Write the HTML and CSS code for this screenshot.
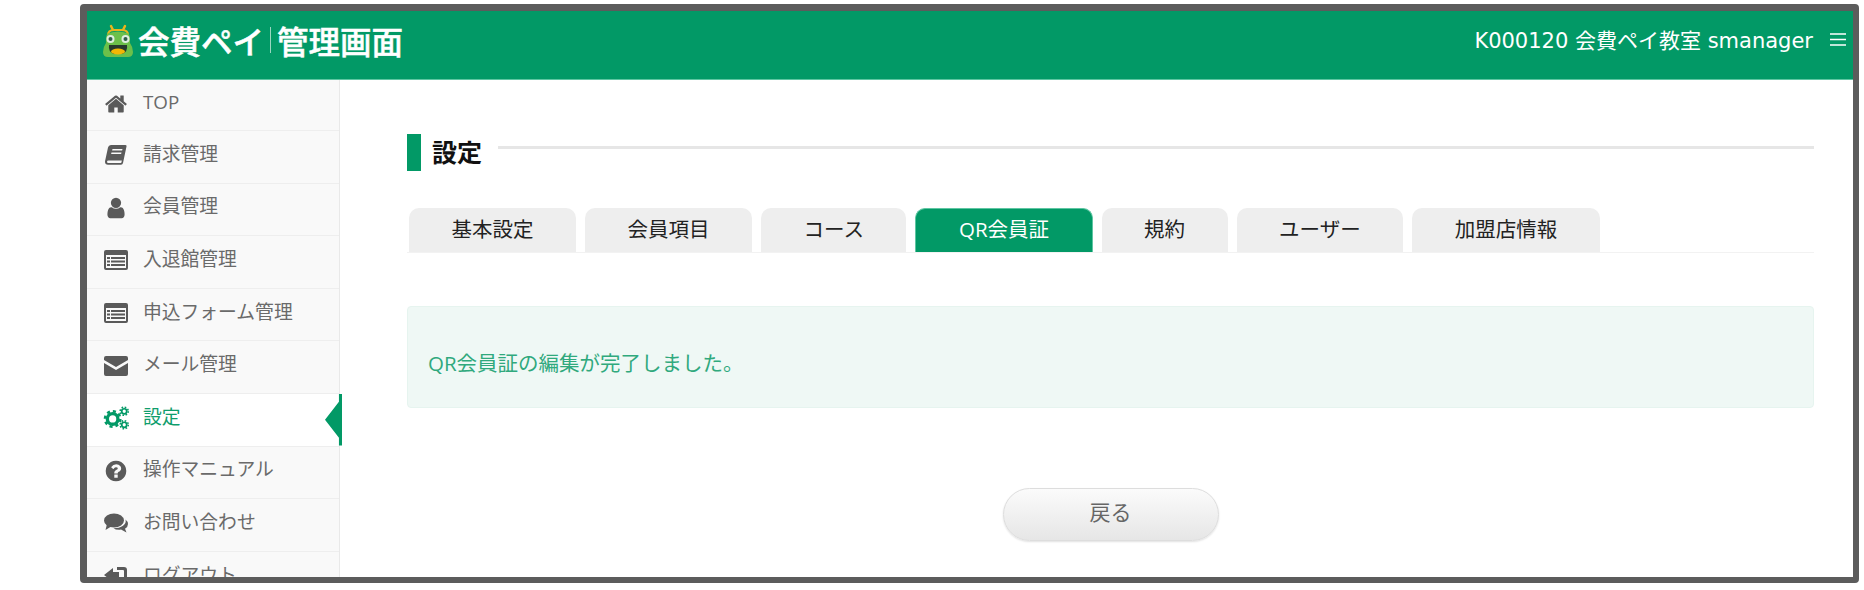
FILE: index.html
```html
<!DOCTYPE html>
<html lang="ja">
<head>
<meta charset="utf-8">
<title>設定</title>
<link rel="stylesheet" href="styles.css">
</head>
<body>
<div class="frame">
  <header class="topbar">
    <div class="brand">
      <svg class="frog" viewBox="0 0 30 33" aria-hidden="true">
        <path d="M5 11 Q5 6 11 6 L19 6 Q25 6 25 11" fill="none" stroke="#e9b51c" stroke-width="2"/>
        <path d="M10 6 L8 2 M20 6 L22 2" stroke="#e9b51c" stroke-width="2.5" stroke-linecap="round"/>
        <path d="M6 9 Q15 6 24 9 Q27 10 27 15 L27 19 Q30 23 30 28 Q30 33 25 33 L5 33 Q0 33 0 28 Q0 23 3 19 L3 15 Q3 10 6 9Z" fill="#6cc04a"/>
        <circle cx="7.500" cy="15" r="4" fill="#dfeee0"/>
        <circle cx="22.500" cy="15" r="4" fill="#dfeee0"/>
        <circle cx="7.500" cy="15" r="2" fill="#2f5f4a"/>
        <circle cx="22.500" cy="15" r="2" fill="#2f5f4a"/>
        <path d="M6 21 L24 21 Q25 28 19 30 L11 30 Q5 28 6 21Z" fill="#263a2c"/>
        <ellipse cx="15" cy="27.500" rx="7" ry="3" fill="#f2b705"/>
      </svg>
      <span class="brand-name">会費ペイ</span>
      <span class="brand-sep"></span>
      <span class="brand-name">管理画面</span>
    </div>
    <div class="account">
      <span>K000120 会費ペイ教室 smanager</span>
      <svg class="burger" viewBox="0 0 16 13" aria-hidden="true"><path d="M0 1H16M0 6.500H16M0 12H16" stroke="#fff" stroke-width="1.600"/></svg>
    </div>
  </header>
  <div class="body">
    <nav class="sidebar">
      <a class="item"><svg class="icon" viewBox="0 0 1792 1792"><path d="M1472 992v480q0 26-19 45t-45 19h-384v-384h-256v384h-384q-26 0-45-19t-19-45v-480q0-1 .5-3t.5-3l575-474 575 474q1 2 1 6zm223-69l-62 74q-8 9-21 11h-3q-13 0-21-7l-692-577-692 577q-12 8-24 7-13-2-21-11l-62-74q-8-10-7-23.500t11-21.500l719-599q32-26 76-26t76 26l244 204v-195q0-14 9-23t23-9h192q14 0 23 9t9 23v408l219 182q10 8 11 21.500t-7 23.500z"/></svg><span>TOP</span></a>
      <a class="item"><svg class="icon" viewBox="0 0 24 24"><path d="M7 2h14.500q1.500 0 1 1.500L19 20q-.4 1.800-2 1.800H4q-3 0-3-3 0-.8.300-1.800L4 4.500Q4.500 2 7 2zm1.500 4-.4 1.500h10l.4-1.500zm-1 3.500-.4 1.500h10l.4-1.500zM4.500 17.500q-1.500 0-1.500 1.300t1.500 1.200h12.200q.6 0 .8-.7l.3-1.800z"/></svg><span>請求管理</span></a>
      <a class="item"><svg class="icon" viewBox="0 0 1792 1792"><path d="M1536 1399q0 109-62.500 187t-150.500 78h-854q-88 0-150.500-78t-62.500-187q0-85 8.500-160.500t31.500-152 58.500-131 94-89 134.500-34.500q131 128 313 128t313-128q76 0 134.500 34.500t94 89 58.500 131 31.500 152 8.500 160.500zm-256-887q0 159-112.500 271.500t-271.500 112.500-271.500-112.500-112.500-271.500 112.500-271.500 271.500-112.500 271.500 112.500 112.500 271.500z"/></svg><span>会員管理</span></a>
      <a class="item"><svg class="icon" viewBox="0 0 24 20"><path fill-rule="evenodd" d="M2 0h20q2 0 2 2v16q0 2-2 2H2q-2 0-2-2V2q0-2 2-2zm0 5v13h20V5zM3 7h3v2H3zm0 3.500h3v2H3zM3 14h3v2H3zM7 7h14v2H7zm0 3.500h14v2H7zM7 14h14v2H7z"/></svg><span>入退館管理</span></a>
      <a class="item"><svg class="icon" viewBox="0 0 24 20"><path fill-rule="evenodd" d="M2 0h20q2 0 2 2v16q0 2-2 2H2q-2 0-2-2V2q0-2 2-2zm0 5v13h20V5zM3 7h3v2H3zm0 3.500h3v2H3zM3 14h3v2H3zM7 7h14v2H7zm0 3.500h14v2H7zM7 14h14v2H7z"/></svg><span>申込フォーム管理</span></a>
      <a class="item"><svg class="icon" viewBox="0 0 24 20"><path d="M0 7l12 7 12-7v11q0 2-2 2H2q-2 0-2-2zM2 0h20q2 0 2 2v2L12 11 0 4V2q0-2 2-2z"/></svg><span>メール管理</span></a>
      <a class="item is-active">
        <svg class="icon" viewBox="0 0 28 24">
          <circle cx="10" cy="13" r="5.500" fill="none" stroke="currentColor" stroke-width="3.500"/>
          <circle cx="10" cy="13" r="8" fill="none" stroke="currentColor" stroke-width="2.500" stroke-dasharray="3.200 3.080"/>
          <circle cx="22" cy="5" r="2.600" fill="none" stroke="currentColor" stroke-width="1.800"/>
          <circle cx="22" cy="5" r="4.200" fill="none" stroke="currentColor" stroke-width="1.600" stroke-dasharray="1.650 1.650"/>
          <circle cx="22" cy="19" r="2.600" fill="none" stroke="currentColor" stroke-width="1.800"/>
          <circle cx="22" cy="19" r="4.200" fill="none" stroke="currentColor" stroke-width="1.600" stroke-dasharray="1.650 1.650"/>
        </svg>
        <span>設定</span>
      </a>
      <a class="item"><svg class="icon" viewBox="0 0 1792 1792"><path d="M1024 1376v-192q0-14-9-23t-23-9h-192q-14 0-23 9t-9 23v192q0 14 9 23t23 9h192q14 0 23-9t9-23zm256-672q0-88-55.500-163t-138.500-116-170-41q-243 0-371 213-15 24 8 42l132 100q7 6 19 6 16 0 25-12 53-68 86-92 34-24 86-24 48 0 85.500 26t37.500 59q0 38-20 61t-68 45q-63 28-115.500 86.500t-52.500 125.500v36q0 14 9 23t23 9h192q14 0 23-9t9-23q0-19 21.500-49.500t54.500-49.500q32-18 49-28.500t46-35 44.500-48 28-60.500 12.500-81zm384 192q0 209-103 385.500t-279.500 279.500-385.500 103-385.500-103-279.500-279.500-103-385.500 103-385.500 279.500-279.500 385.500-103 385.500 103 279.500 279.500 103 385.500z"/></svg><span>操作マニュアル</span></a>
      <a class="item"><svg class="icon" viewBox="0 0 24 20"><ellipse cx="10" cy="7.500" rx="10" ry="7"/><path d="M3 11 1.500 17 8 13z"/><path d="M21.500 6.500Q24 8.500 24 11q0 3-3 4.800l1.500 3.700L17 16.500q-1 .2-2 .2-3.500 0-5.500-1.500 6 0 9.500-2.500t2.500-6.200z"/></svg><span>お問い合わせ</span></a>
      <a class="item"><svg class="icon" viewBox="0 0 24 20"><path d="M0 9 9 2v4h6v5H9v5z"/><path d="M13 1h7q3 0 3 3v12q0 3-3 3h-7v-3h6q1 0 1-1V5q0-1-1-1h-6z"/></svg><span>ログアウト</span></a>
    </nav>
    <main class="content">
      <div class="heading">
        <span class="heading-mark"></span>
        <h1 class="heading-text">設定</h1>
        <span class="heading-rule"></span>
      </div>
      <div class="tabs">
        <a class="tab">基本設定</a>
        <a class="tab">会員項目</a>
        <a class="tab">コース</a>
        <a class="tab is-current">QR会員証</a>
        <a class="tab">規約</a>
        <a class="tab">ユーザー</a>
        <a class="tab">加盟店情報</a>
      </div>
      <div class="notice">QR会員証の編集が完了しました。</div>
      <div class="actions"><button class="back" type="button">戻る</button></div>
    </main>
  </div>
</div>
</body>
</html>
```
FILE: styles.css
```css
* { box-sizing: border-box; }
html, body { margin: 0; height: 100%; }
body {
  padding: 4px 5px 7px 80px;
  background: #fff;
  overflow: hidden;
  font-family: "Open Sans", "Noto Sans CJK JP", sans-serif;
}
.frame {
  display: flex;
  flex-direction: column;
  height: 100%;
  border: 7px solid #5c5c5c;
  border-width: 7px 6px 6px 7px;
  border-radius: 4px;
  overflow: hidden;
  background: #fff;
}
.topbar {
  flex: 0 0 69px;
  display: flex;
  align-items: center;
  justify-content: space-between;
  background: #029966;
  border-bottom: 1px solid #5ec6a2;
  color: #fff;
}
.brand { display: flex; align-items: center; padding: 0 0 10px 16px; }
.frog { width: 30px; height: 33px; margin-right: 5px; }
.brand-name {
  font-size: 31.500px;
  font-weight: 500;
  line-height: 40px;
  font-family: "Noto Sans CJK JP", sans-serif;
  -webkit-text-stroke: .5px #fff;
}
.brand-sep { width: 1px; height: 26px; margin: 0 6px; background: #9ad6c0; }
.account {
  display: flex;
  align-items: center;
  padding: 0 7px 12px 0;
  font-size: 21px;
  font-family: "DejaVu Sans", "Noto Sans CJK JP", sans-serif;
}
.burger { width: 16px; height: 13px; margin-left: 17px; }
.body { flex: 1; display: flex; min-height: 0; }
.sidebar {
  flex: 0 0 253px;
  display: flex;
  flex-direction: column;
  background: #f9f9f9;
  border-right: 1px solid #e9e9e9;
}
.item {
  position: relative;
  flex: 0 0 52.600px;
  display: flex;
  align-items: center;
  padding-left: 17px;
  border-bottom: 1px solid #eeeeee;
  color: #6a6a6a;
  font-size: 18.800px;
  line-height: 26px;
}
.item:first-child { flex-basis: 51px; }
.item span { margin-top: -6px; }
.icon { width: 24px; height: 24px; margin: -3px 15px 0 0; fill: #5a5a5a; flex: none; }
.is-active { background: #fff; color: #0f9d6c; }
.is-active .icon { width: 27px; margin: -3px 13px 0 -1px; fill: none; color: #029966; }
.is-active::after {
  content: "";
  position: absolute;
  right: -3px;
  top: 0;
  bottom: 0;
  width: 17px;
  background: #029966;
  clip-path: polygon(100% 0, 100% 100%, 82% 100%, 82% 85%, 0 50%, 82% 15%, 82% 0);
}
.content {
  flex: 1;
  min-width: 0;
  padding: 54px 39px 0 67px;
}
.heading { display: flex; align-items: center; height: 37px; }
.heading-mark { width: 14px; height: 37px; background: #029966; }
.heading-text {
  margin: 0 16px 3px 11px;
  font-size: 25px;
  font-weight: 700;
  line-height: 34px;
  color: #111;
  font-family: "Noto Sans CJK JP", sans-serif;
}
.heading-rule { flex: 1; height: 3px; margin-bottom: 10px; background: #e6e6e6; }
.tabs {
  display: flex;
  gap: 9px;
  margin-top: 37px;
  padding-left: 2px;
  border-bottom: 1px solid #f2f2f2;
}
.tab {
  height: 44px;
  padding: 0 42.500px;
  border-radius: 10px 10px 0 0;
  background: #eeeeee;
  color: #222;
  font-size: 20.500px;
  line-height: 42px;
}
.tab.is-current { background: #029966; color: #fff; border: 1px solid #5ec6a2; border-bottom: 0; line-height: 40px; }
.notice {
  margin-top: 53px;
  height: 102px;
  padding: 41px 20px 0;
  border: 1px solid #e6f4ef;
  border-radius: 4px;
  background: #eff8f5;
  color: #30a97d;
  font-size: 20.500px;
  line-height: 30px;
}
.actions { display: flex; justify-content: center; margin-top: 80px; }
.back {
  width: 216px;
  height: 53px;
  border: 1px solid #dddddd;
  border-radius: 27px;
  background: linear-gradient(#fbfbfb, #e6e6e6);
  box-shadow: 0 1px 2px rgba(0, 0, 0, .12);
  color: #666;
  font-family: inherit;
  font-size: 21px;
  line-height: 1;
  padding: 0 0 4px;
}
```
